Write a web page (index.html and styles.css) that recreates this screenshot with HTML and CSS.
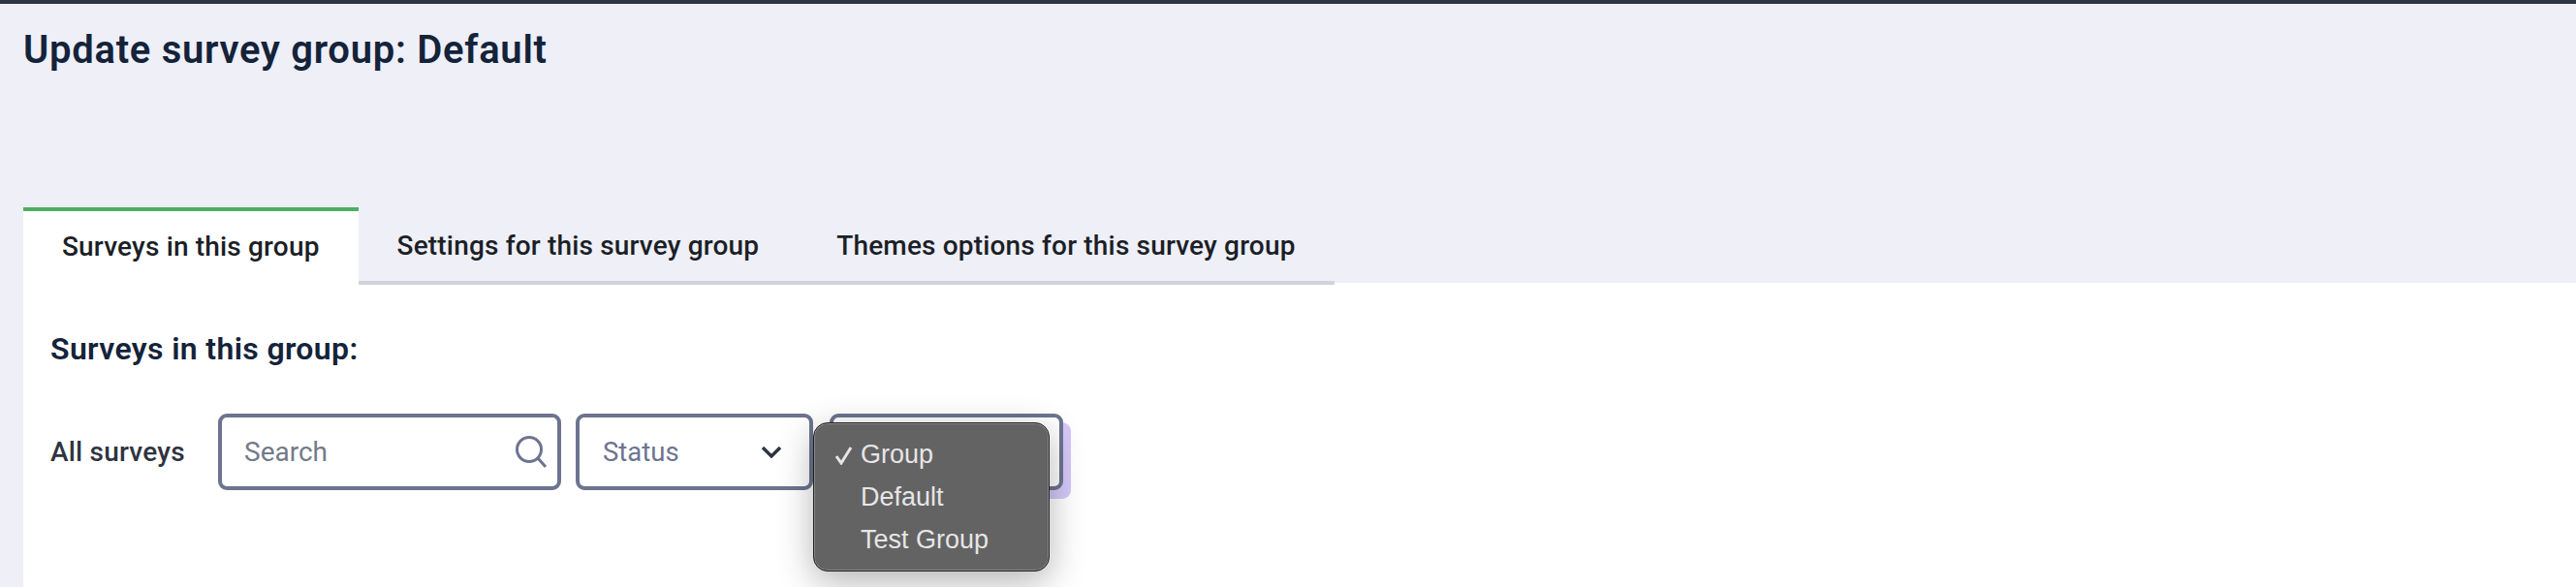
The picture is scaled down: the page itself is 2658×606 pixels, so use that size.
FILE: index.html
```html
<!DOCTYPE html>
<html lang="en">
<head>
  <meta charset="UTF-8">
  <title>Update survey group: Default</title>
  <link rel="stylesheet" href="styles.css">
</head>
<body>
  <div class="page-header">
    <h1>Update survey group: Default</h1>
  </div>

  <div class="tabs">
    <a class="tab active">Surveys in this group</a>
    <a class="tab">Settings for this survey group</a>
    <a class="tab">Themes options for this survey group</a>
  </div>

  <div class="panel">
    <h2>Surveys in this group:</h2>
    <div class="filters">
      <span class="filter-label">All surveys</span>
      <div class="field search">
        <span>Search</span>
        <svg width="32" height="33" viewBox="0 0 32 33" fill="none" stroke="#6d7490" stroke-width="3">
          <circle cx="14" cy="14" r="12.5"/>
          <path d="M23 23l8 9"/>
        </svg>
      </div>
      <div class="field status">
        <span>Status</span>
        <svg width="20" height="12" viewBox="0 0 20 12" fill="none" stroke="#2f3441" stroke-width="3.4">
          <path d="M1 1l9 9 9-9"/>
        </svg>
      </div>
      <div class="field group">
        <ul class="menu">
          <li class="checked">
            <svg class="check" width="19" height="20" viewBox="0 0 19 20" fill="none" stroke="#e6e6e6" stroke-width="3">
              <path d="M2 11l5 7L17 2"/>
            </svg>
            Group
          </li>
          <li>Default</li>
          <li>Test Group</li>
        </ul>
      </div>
    </div>
  </div>
</body>
</html>
```

FILE: styles.css
```css
* {
  box-sizing: border-box;
}
html, body {
  height: 100%;
}
body {
  margin: 0;
  display: flex;
  flex-direction: column;
  font-family: Roboto, sans-serif;
  background-color: #eeeff7;
  border-top: 4px solid #2f3441;
  overflow: hidden;
}
.page-header {
  height: 210px;
  padding: 24px 24px 0;
}
h1 {
  margin: 0;
  font-size: 40px;
  line-height: 48px;
  font-weight: 600;
  letter-spacing: 0.72px;
  color: #14233a;
}
.tabs {
  display: flex;
  align-self: flex-start;
  margin-left: 24px;
  margin-bottom: -2px;
  border-bottom: 4px solid #d2d3da;
  position: relative;
}
.tab {
  height: 80px;
  padding: 0 40px 1px;
  margin-bottom: -4px;
  display: flex;
  align-items: center;
  font-size: 28px;
  font-weight: 500;
  letter-spacing: 0.17px;
  color: #1c1f27;
  white-space: nowrap;
}
.tab.active {
  background-color: #fff;
  border-top: 4px solid #4fae64;
  padding-bottom: 3px;
}
.panel {
  flex: 1;
  margin-left: 24px;
  padding: 49px 28px 0;
  background-color: #fff;
}
h2 {
  margin: 0 0 48px;
  font-size: 32px;
  line-height: 38px;
  font-weight: 600;
  letter-spacing: 0.35px;
  color: #14233a;
}
.filters {
  display: flex;
  align-items: center;
}
.filter-label {
  width: 173px;
  font-size: 28px;
  font-weight: 500;
  letter-spacing: 0.2px;
  color: #2f3441;
}
.field {
  height: 79px;
  border: 4px solid #6d7490;
  border-radius: 9px;
  background-color: #fff;
  display: flex;
  align-items: center;
  justify-content: space-between;
  padding: 0 23px;
  font-size: 27.5px;
  color: #6d7490;
}
.search {
  width: 354px;
  padding-right: 11px;
  font-size: 28px;
  color: #737a8a;
}
.status {
  width: 245px;
  margin-left: 15px;
  padding: 0 29px 0 24px;
}
.group {
  width: 241px;
  margin-left: 17px;
  position: relative;
  box-shadow: 8px 9px 0 0 #d4c9f8;
}
.menu {
  position: absolute;
  left: -21px;
  top: 5px;
  width: 244px;
  height: 154px;
  margin: 0;
  padding: 10px 0 0 48px;
  list-style: none;
  background-color: #636363;
  border: 1px solid #1f1f1f;
  border-radius: 15px;
  box-shadow: inset 0 0 0 1px #8a8a8a, 0 10px 36px rgba(0, 0, 0, 0.3);
  font-family: "Liberation Sans", sans-serif;
  font-size: 27px;
  line-height: 44px;
  color: #e6e6e6;
}
.checked {
  position: relative;
}
.check {
  position: absolute;
  left: -27px;
  top: 13px;
}
```
